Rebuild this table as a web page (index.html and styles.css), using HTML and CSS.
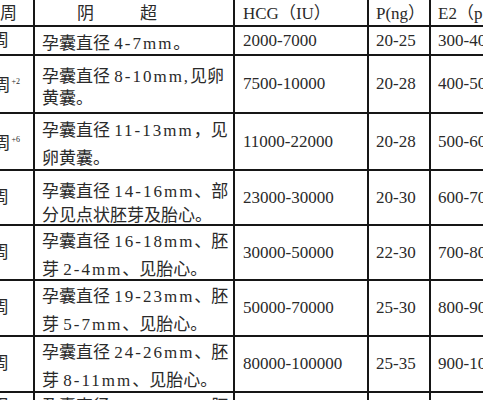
FILE: index.html
```html
<!DOCTYPE html>
<html lang="zh-CN">
<head>
<meta charset="utf-8">
<title>孕周与阴超、HCG、P、E2对照表</title>
<link rel="stylesheet" href="styles.css">
</head>
<body>
<div class="table">
  <div class="cell wk head"><span>孕周</span></div>
  <div class="cell desc head"><span><span class="spread">阴</span>超</span></div>
  <div class="cell num head"><span>HCG（IU）</span></div>
  <div class="cell num head"><span>P(ng）</span></div>
  <div class="cell num head"><span>E2（pg/ml）</span></div>

  <div class="cell wk"><span>5周</span></div>
  <div class="cell desc"><p>孕囊直径 <span class="lat">4-7mm</span>。</p></div>
  <div class="cell num"><span>2000-7000</span></div>
  <div class="cell num"><span>20-25</span></div>
  <div class="cell num"><span>300-400</span></div>

  <div class="cell wk sup-row"><span>5周<sup>+2</sup></span></div>
  <div class="cell desc tight"><p>孕囊直径 <span class="lat">8-10mm,</span>见卵<br>黄囊。</p></div>
  <div class="cell num"><span>7500-10000</span></div>
  <div class="cell num"><span>20-28</span></div>
  <div class="cell num"><span>400-500</span></div>

  <div class="cell wk sup-row"><span>5周<sup>+6</sup></span></div>
  <div class="cell desc"><p>孕囊直径 <span class="lat">11-13mm</span>，见<br>卵黄囊。</p></div>
  <div class="cell num"><span>11000-22000</span></div>
  <div class="cell num"><span>20-28</span></div>
  <div class="cell num"><span>500-600</span></div>

  <div class="cell wk"><span>6周</span></div>
  <div class="cell desc mid"><p>孕囊直径 <span class="lat">14-16mm</span>、部<br>分见点状胚芽及胎心。</p></div>
  <div class="cell num"><span>23000-30000</span></div>
  <div class="cell num"><span>20-30</span></div>
  <div class="cell num"><span>600-700</span></div>

  <div class="cell wk"><span>7周</span></div>
  <div class="cell desc"><p>孕囊直径 <span class="lat">16-18mm</span>、胚<br>芽 <span class="lat">2-4mm</span>、见胎心。</p></div>
  <div class="cell num"><span>30000-50000</span></div>
  <div class="cell num"><span>22-30</span></div>
  <div class="cell num"><span>700-800</span></div>

  <div class="cell wk"><span>8周</span></div>
  <div class="cell desc"><p>孕囊直径 <span class="lat">19-23mm</span>、胚<br>芽 <span class="lat">5-7mm</span>、见胎心。</p></div>
  <div class="cell num"><span>50000-70000</span></div>
  <div class="cell num"><span>25-30</span></div>
  <div class="cell num"><span>800-900</span></div>

  <div class="cell wk"><span>9周</span></div>
  <div class="cell desc"><p>孕囊直径 <span class="lat">24-26mm</span>、胚<br>芽 <span class="lat">8-11mm</span>、见胎心。</p></div>
  <div class="cell num"><span>80000-100000</span></div>
  <div class="cell num"><span>25-35</span></div>
  <div class="cell num"><span>900-1000</span></div>

  <div class="cell wk last"><span>10周</span></div>
  <div class="cell desc last"><p>孕囊直径 <span class="lat">27-32mm</span>、胚<br>芽 <span class="lat">12-15mm</span>、见胎心。</p></div>
  <div class="cell num last"><span>100000-150000</span></div>
  <div class="cell num last"><span>25-35</span></div>
  <div class="cell num last"><span>1000-1200</span></div>
</div>
</body>
</html>
```

FILE: styles.css
```css
html, body {
  margin: 0;
  padding: 0;
  background: #ffffff;
  overflow: hidden;
}

body {
  width: 483px;
  height: 400px;
}

.table {
  display: grid;
  width: max-content;
  grid-template-columns: 33px 198px 132px 60px 120px;
  grid-template-rows: 25px 27px 56px 55px 53px 53px 54px 54px 60px;
  gap: 2px;
  background: #161616;
  font-family: "Liberation Serif", "Noto Sans CJK SC", serif;
  font-size: 17px;
  color: #2a2a2a;
}

.cell {
  background: #ffffff;
  display: flex;
  align-items: center;
  line-height: 28px;
  white-space: nowrap;
  box-sizing: border-box;
  overflow: visible;
}

.cell p {
  margin: 0;
}

.cell.last {
  align-items: flex-start;
}

.head {
  padding-top: 2px;
}

.wk {
  justify-content: flex-end;
  padding-right: 24px;
}

.wk.head {
  padding-right: 16px;
}

.wk.sup-row {
  padding-right: 13px;
  padding-top: 4px;
}

.wk sup {
  font-size: 8px;
  line-height: 0;
  vertical-align: 7px;
  margin-left: 1px;
}

.desc {
  padding-left: 7px;
  padding-top: 6px;
}

.desc.head {
  padding-left: 42px;
  padding-top: 2px;
}

.desc.tight {
  line-height: 22px;
  padding-top: 8px;
}

.desc.mid {
  line-height: 24px;
  padding-top: 12px;
}

.desc.last {
  padding-top: 0;
}

.spread {
  margin-right: 46px;
}

.lat {
  letter-spacing: 2px;
}

.num {
  padding-left: 8px;
}

.num + .num {
  padding-left: 7px;
}
```
